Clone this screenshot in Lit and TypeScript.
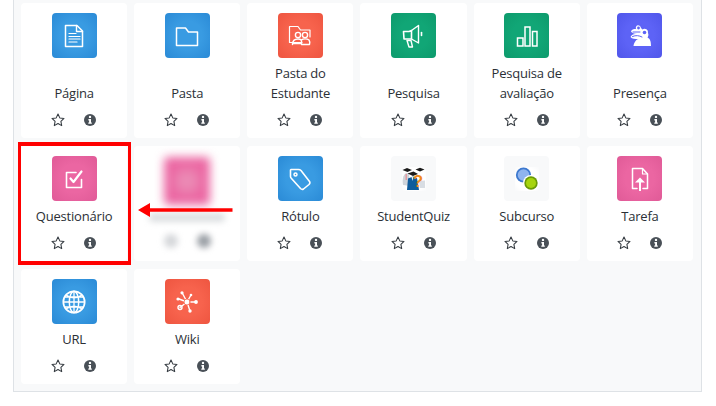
import { LitElement, html, css, svg } from "lit";
import { customElement } from "lit/decorators.js";

const s = (body: unknown) => html`<svg class="glyph" viewBox="0 0 24 24" fill="none" stroke="#fff" stroke-width="1.4" stroke-linejoin="round" stroke-linecap="round">${body}</svg>`;

const icons: Record<string, unknown> = {
  page: s(svg`<path d="M3.5 1.5H15L20.5 7V22.5H3.5Z" stroke-width="1.5"/><path d="M14.5 1.5V7.5H20.5"/><path d="M7 9.5H14M7 12.5H18M7 15H18M7 18H15" stroke-width="1.2"/>`),
  folder: s(svg`<path d="M1.5 4H10.5L13.5 8H22.5V21.5H1.5Z" stroke-width="1.5"/>`),
  studentFolder: s(svg`<path d="M14 18.5H1.5V2.5H10L12.5 6H22V13" stroke-width="1.2"/><circle cx="10" cy="11" r="2.6"/><circle cx="17" cy="11" r="2.6"/><path d="M4.5 20.5C4.5 16 7 15 10 15C13 15 14 16 13.5 19.5H4.5ZM13.5 16C15 14.5 19 14.5 21 16C22 17.5 22 19 21.5 20.5H13.5" stroke-width="1.4"/>`),
  survey: s(svg`<path d="M1.5 7.5H7L9.5 6.5V15H2Z" stroke-width="1.6"/><path d="M9.5 6.5L16.5 1.5V19L9.5 15" stroke-width="1.4"/><path d="M19.5 8.5V11.5" stroke-width="1.6"/><path d="M5 16.5L9 16.5L10.5 23H7Z" stroke-width="1.4"/>`),
  bars: s(svg`<path d="M2.5 14H8V22H2.5ZM10 3H15V22H10ZM17.5 7.5H22V22H17.5Z" stroke-width="1.5" stroke-linejoin="miter"/>`),
  presence: s(svg`<path fill="#fff" stroke="none" d="M9 1.5A3 3 0 0 1 13 4L14.5 5.5A3.5 3.5 0 0 1 20 9C21 11 20 12.5 19.5 13.5C21.5 14.5 23 16 23 22H5.5C6 18.5 8 15.5 10.5 15C7 15 4 15 2.5 13C3.5 10.5 6 9.5 9 10C6 10 4 9 3 7.5C3.5 5.5 5.5 5 8 5C7.5 3.5 8 2.5 9 1.5Z"/><circle cx="10.5" cy="4" r="1.4" fill="#5d63f6" stroke="none"/><circle cx="16.5" cy="8.5" r="1.8" fill="#5d63f6" stroke="none"/><path d="M5 8H12M4.5 12.5C8 11 11 11.5 14 13" stroke="#5d63f6" stroke-width="1"/>`),
  quiz: s(svg`<path d="M19.5 12.5V20.5H4.5V5.5H14" stroke-width="1.6"/><path d="M8.5 11.5L11.5 15L19.5 4.5" stroke-width="2.2"/>`),
  tag: s(svg`<path d="M3 2.5H10.5Q12 2.5 13 3.5L21.5 14.5Q22.5 16 21 17.5L15.5 22Q14 23 12.5 21.5L3.5 11.5Q2.5 10.5 2.5 9.5V3Z" stroke-width="1.6"/><circle cx="7.5" cy="7.5" r="1.5" stroke-width="1.5"/>`),
  assign: s(svg`<path d="M9 21.5H4.5V1.5H14.5L19.5 7V21.5H15" stroke-width="1.5"/><path d="M14.5 1.5V7H19.5" stroke-width="1.2"/><path d="M12 23.5V13" stroke-width="2"/><path fill="#fff" stroke="none" d="M12 10.5L17 15.5H7Z"/>`),
  globe: html`<svg class="glyph" viewBox="0 0 24 24" fill="none" stroke="#fff" stroke-width="1.5"><circle cx="12" cy="12" r="10.7" stroke-width="1.7"/><ellipse cx="12" cy="12" rx="4.7" ry="10.7"/><path d="M12 1V23M2.5 7H21.5M1.5 12H22.5M2.5 17H21.5M4 5C9 8.5 15 8.5 20 5M4 19C9 15.5 15 15.5 20 19" stroke-width="1.3"/></svg>`,
  wiki: s(svg`<path d="M12 12L7 2.5M12 12L16 5M12 12H21.5M12 12L4 9M12 12L5 17.5M12 12L15 21" stroke-width="1.4"/><circle cx="12" cy="12" r="3" fill="#fff" stroke="#f7634d" stroke-width="0.8"/><circle cx="7" cy="2.8" r="1.6" fill="#fff" stroke="none"/><circle cx="16" cy="5" r="1.3" fill="#fff" stroke="none"/><circle cx="21" cy="12" r="1.9" fill="#fff" stroke="none"/><circle cx="3" cy="9" r="1.6" fill="#fff" stroke="none"/><circle cx="5" cy="17.5" r="2" fill="none" stroke="#fff"/><circle cx="15" cy="21" r="1.7" fill="#fff" stroke="none"/>`),
  studentquiz: html`<svg class="glyph" viewBox="0 0 24 24" stroke="none">
    <path fill="#cfd4da" d="M1 18C0 13 1 8 4 6L7 7L8 19Z"/>
    <path fill="#d8dde3" d="M17 14L23 13.5V21H18Z"/>
    <path fill="#e29aa0" d="M3.5 7H5V13H3.5Z"/>
    <path fill="#0f5c9c" d="M5 23L6 11.5L11 9.5L15 11L17 23Z"/>
    <path fill="#e6edf5" d="M9.5 10H11.5L10.5 14Z"/>
    <path fill="#1a1a1a" d="M0.5 3L5 1L10 3L5.5 5ZM5.5 6.5L11.5 4.5L16 7L11 9ZM13.5 2.5L18 .8L22.5 2.5L18 4.5Z"/>
    <text x="16" y="19.5" text-anchor="middle" font-family="'Liberation Sans',sans-serif" font-weight="700" font-size="17" fill="#f0891c">?</text>
  </svg>`,
  subcourse: html`<svg class="glyph" viewBox="0 0 24 24" stroke="none">
    <circle cx="8.5" cy="8" r="7.6" fill="#3d79cf"/><circle cx="8.5" cy="8" r="5.8" fill="#8fb4ee"/>
    <circle cx="16" cy="16" r="8" fill="#fff"/><circle cx="16" cy="16" r="6.7" fill="#6a9a06"/><circle cx="16" cy="16" r="5" fill="#a6d40d"/>
  </svg>`,
};

const star = html`<svg class="star" viewBox="0 0 14 14" fill="none" stroke="#343a40" stroke-width="1.05" stroke-linejoin="round"><path d="M7 1L8.8 4.9L13 5.4L9.9 8.3L10.7 12.6L7 10.5L3.3 12.6L4.1 8.3L1 5.4L5.2 4.9Z"/></svg>`;
const info = html`<svg class="info" viewBox="0 0 12 12"><circle cx="6" cy="6" r="6" fill="#495057"/><circle cx="6" cy="2.9" r="1.2" fill="#fff"/><path d="M4.4 5H7V8.4H7.8V9.8H4.3V8.4H5.1V6.4H4.4Z" fill="#fff"/></svg>`;

type Item = { name: string; tone: string; icon?: string; hidden?: boolean; marked?: boolean };
const items: Item[] = [
  { name: "Página", tone: "blue", icon: "page" },
  { name: "Pasta", tone: "blue", icon: "folder" },
  { name: "Pasta do Estudante", tone: "coral", icon: "studentFolder" },
  { name: "Pesquisa", tone: "green", icon: "survey" },
  { name: "Pesquisa de avaliação", tone: "green", icon: "bars" },
  { name: "Presença", tone: "indigo", icon: "presence" },
  { name: "Questionário", tone: "pink", icon: "quiz", marked: true },
  { name: "", tone: "pink", hidden: true },
  { name: "Rótulo", tone: "blue", icon: "tag" },
  { name: "StudentQuiz", tone: "plain", icon: "studentquiz" },
  { name: "Subcurso", tone: "plain", icon: "subcourse" },
  { name: "Tarefa", tone: "pink", icon: "assign" },
  { name: "URL", tone: "blue", icon: "globe" },
  { name: "Wiki", tone: "coral", icon: "wiki" },
];

@customElement("app-root")
export class AppRoot extends LitElement {
  static styles = css`
    :host { display: block; width: 716px; height: 406px; background: #fff; overflow: hidden;
      font-family: "Open Sans", "Noto Sans", sans-serif; color: #2b3036; }
    .panel { box-sizing: border-box; margin-left: 13px; width: 689px; height: 392px; background: #f8f9fa;
      border: 1px solid #dee2e6; border-top: 0; padding: 3.4px 8px 0 7px; }
    .grid { display: grid; grid-template-columns: repeat(6, 1fr); grid-template-rows: 134.8px 114.8px 114.8px; column-gap: 7px; row-gap: 8.2px; }
    .card { position: relative; background: #fff; border-radius: 4px; display: flex; flex-direction: column;
      align-items: center; padding-top: 10px; box-sizing: border-box; min-height: 0; }
    .tile { width: 45px; height: 45px; border-radius: 4px; display: flex; align-items: center; justify-content: center; flex: none; }
    .blue { background: radial-gradient(circle, #399be2 45%, #2a8ad6 100%); }
    .coral { background: radial-gradient(circle, #f7634d 45%, #ee5540 100%); }
    .green { background: radial-gradient(circle, #11a676 45%, #0d9a6c 100%); }
    .indigo { background: radial-gradient(circle, #5d63f6 45%, #5056ea 100%); }
    .pink { background: radial-gradient(circle, #eb66a2 45%, #e05a97 100%); }
    .plain { background: #f8f9fa; }
    .plain .glyph { background: radial-gradient(circle, #fff 65%, transparent 100%); }
    .glyph { width: 24px; height: 24px; display: block; }
    .name { flex: 1; display: flex; align-items: flex-end; justify-content: center; text-align: center;
      font-size: 13px; line-height: 20px; margin-top: 4px; min-height: 20px; padding: 0 2px; letter-spacing: -0.2px; }
    .acts { display: flex; justify-content: center; gap: 19px; align-items: center; height: 20px; margin: 7px 1px 8px 0; }
    .star { width: 14px; height: 14px; display: block; }
    .info { width: 12px; height: 12px; display: block; }
    .blurred { filter: blur(5px); width: 46px; height: 48px; margin-top: 1px; background: radial-gradient(circle, #eb8db6 15%, #eb66a2 55%); }
    .smudge { width: 76px; height: 9px; background: #dcdfe1; margin-top: 8px; border-radius: 4px; filter: blur(3px); flex: none; }
    .spots { display: flex; gap: 19px; margin-top: 12px; filter: blur(3px); }
    .spots i { width: 14px; height: 14px; border-radius: 50%; background: #d5d7da; display: block; }
    .spots i + i { background: #9a9fa5; }
    .mark { position: absolute; left: -3px; top: -4px; right: -4px; bottom: -4px; border: 3px solid #f00; border-top-width: 4px; border-bottom-width: 4px; }
    .arrow { position: absolute; left: 4px; top: 56px; width: 95px; height: 16px; display: block; }
  `;

  render() {
    return html`<div class="panel"><div class="grid">
      ${items.map((it) => it.hidden
        ? html`<div class="card">
            <div class="tile blurred"></div>
            <div class="smudge"></div>
            <div class="spots"><i></i><i></i></div>
            <svg class="arrow" viewBox="0 0 95 16"><path d="M0 8L12 1V6.3H94.5V9.8H12V15Z" fill="#f00"/></svg>
          </div>`
        : html`<div class="card">
            <div class="tile ${it.tone}">${it.icon ? icons[it.icon] : ""}</div>
            <div class="name"><span>${it.name}</span></div>
            <div class="acts">${star}${info}</div>
            ${it.marked ? html`<div class="mark"></div>` : ""}
          </div>`)}
    </div></div>`;
  }
}
